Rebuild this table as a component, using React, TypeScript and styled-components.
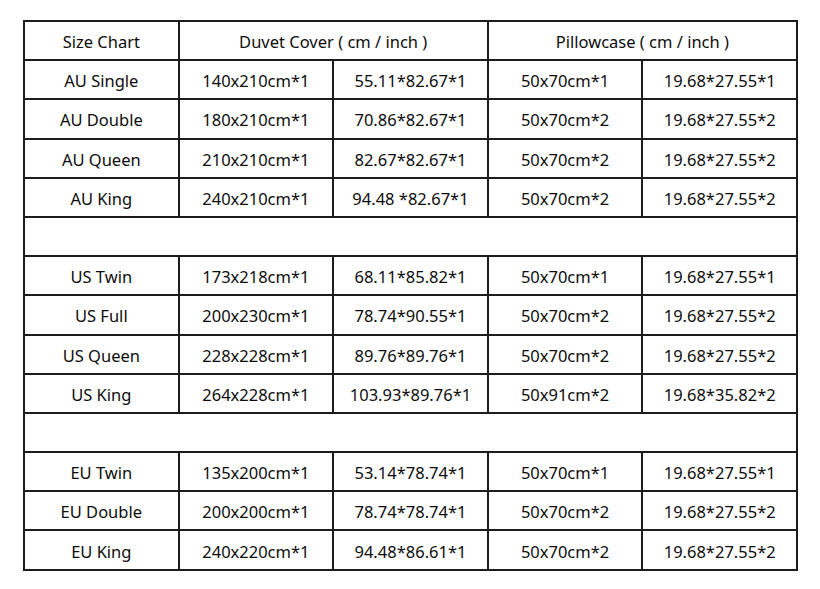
import React from 'react';
import styled, { createGlobalStyle } from 'styled-components';

const GlobalStyle = createGlobalStyle`
  html, body {
    margin: 0;
    padding: 0;
    background: #ffffff;
  }
`;

type Row = [string, string, string, string, string];

// groups separated by an empty row
const groups: Row[][] = [
  [
    ['AU Single', '140x210cm*1', '55.11*82.67*1', '50x70cm*1', '19.68*27.55*1'],
    ['AU Double', '180x210cm*1', '70.86*82.67*1', '50x70cm*2', '19.68*27.55*2'],
    ['AU Queen', '210x210cm*1', '82.67*82.67*1', '50x70cm*2', '19.68*27.55*2'],
    ['AU King', '240x210cm*1', '94.48 *82.67*1', '50x70cm*2', '19.68*27.55*2'],
  ],
  [
    ['US Twin', '173x218cm*1', '68.11*85.82*1', '50x70cm*1', '19.68*27.55*1'],
    ['US Full', '200x230cm*1', '78.74*90.55*1', '50x70cm*2', '19.68*27.55*2'],
    ['US Queen', '228x228cm*1', '89.76*89.76*1', '50x70cm*2', '19.68*27.55*2'],
    ['US King', '264x228cm*1', '103.93*89.76*1', '50x91cm*2', '19.68*35.82*2'],
  ],
  [
    ['EU Twin', '135x200cm*1', '53.14*78.74*1', '50x70cm*1', '19.68*27.55*1'],
    ['EU Double', '200x200cm*1', '78.74*78.74*1', '50x70cm*2', '19.68*27.55*2'],
    ['EU King', '240x220cm*1', '94.48*86.61*1', '50x70cm*2', '19.68*27.55*2'],
  ],
];

export default function App() {
  return (
    <Page>
      <GlobalStyle />
      <Chart>
        <colgroup>
          {[0, 1, 2, 3, 4].map((i) => (
            <col key={i} style={{ width: '20%' }} />
          ))}
        </colgroup>
        <tbody>
          <Line>
            <Cell>Size Chart</Cell>
            <Cell colSpan={2}>Duvet Cover ( cm / inch )</Cell>
            <Cell colSpan={2}>Pillowcase ( cm / inch )</Cell>
          </Line>
          {groups.map((group, gi) => (
            <React.Fragment key={gi}>
              {gi > 0 && (
                <Line>
                  <Cell colSpan={5} />
                </Line>
              )}
              {group.map((row) => (
                <Line key={row[0]}>
                  {row.map((v, i) => (
                    <Cell key={i}>{v}</Cell>
                  ))}
                </Line>
              ))}
            </React.Fragment>
          ))}
        </tbody>
      </Chart>
    </Page>
  );
}

const Page = styled.div`
  padding: 20px 0 0 23px;
  width: 820px;
  height: 589px;
  box-sizing: border-box;
`;

const Chart = styled.table`
  width: 775px;
  border-collapse: collapse;
  table-layout: fixed;
  font-family: 'Noto Sans', 'Open Sans', sans-serif;
  font-size: 16.5px;
  color: #0d0d0d;
`;

const Line = styled.tr`
  height: 39.2px;
`;

const Cell = styled.td`
  border: 2px solid #1c1c1c;
  padding: 2px 0 0;
  text-align: center;
  vertical-align: middle;
  white-space: nowrap;
`;
